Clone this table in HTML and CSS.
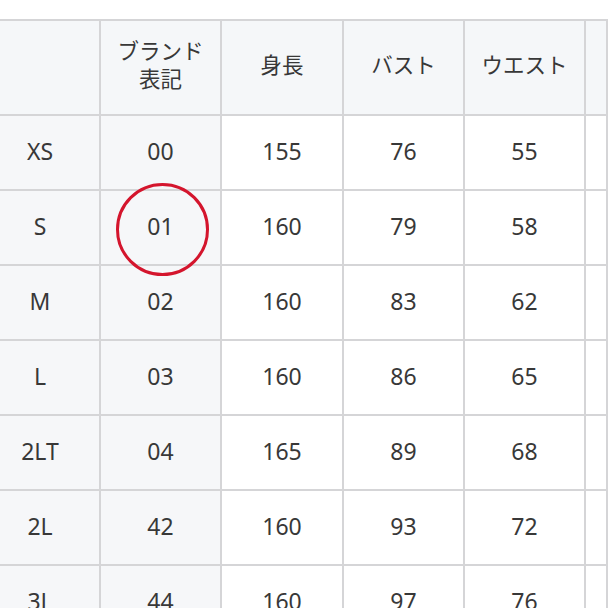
FILE: index.html
```html
<!DOCTYPE html>
<html lang="ja">
<head>
<meta charset="utf-8">
<link rel="stylesheet" href="styles.css">
</head>
<body>
<div class="wrap">
<table class="size-table">
  <colgroup>
    <col class="c-size"><col class="c-brand"><col class="c-h"><col class="c-b"><col class="c-w"><col class="c-last">
  </colgroup>
  <thead>
    <tr><th></th><th>ブランド<br>表記</th><th>身長</th><th>バスト</th><th>ウエスト</th><th></th></tr>
  </thead>
  <tbody>
    <tr><th>XS</th><td class="brand">00</td><td>155</td><td>76</td><td>55</td><td></td></tr>
    <tr><th>S</th><td class="brand marked">01<span class="ring"></span></td><td>160</td><td>79</td><td>58</td><td></td></tr>
    <tr><th>M</th><td class="brand">02</td><td>160</td><td>83</td><td>62</td><td></td></tr>
    <tr><th>L</th><td class="brand">03</td><td>160</td><td>86</td><td>65</td><td></td></tr>
    <tr><th>2LT</th><td class="brand">04</td><td>165</td><td>89</td><td>68</td><td></td></tr>
    <tr><th>2L</th><td class="brand">42</td><td>160</td><td>93</td><td>72</td><td></td></tr>
    <tr><th>3L</th><td class="brand">44</td><td>160</td><td>97</td><td>76</td><td></td></tr>
  </tbody>
</table>
</div>
</body>
</html>
```
FILE: styles.css
```css
html, body {
  margin: 0;
  padding: 0;
  background: #ffffff;
  overflow: hidden;
}
.wrap {
  padding-top: 19px;
  width: 608px;
  height: 608px;
  overflow: hidden;
}
.size-table {
  margin-left: -21px;
  table-layout: fixed;
  border-collapse: separate;
  border-spacing: 2px;
  background: #d5d5d7;
  width: 629px;
  font-family: "Noto Sans", "Noto Sans CJK JP", sans-serif;
  font-size: 23px;
  color: #383838;
}
.c-size { width: 118px; }
.c-brand { width: 119px; }
.c-h { width: 120px; }
.c-b { width: 119px; }
.c-w { width: 119px; }
.c-last { width: 20px; }
.size-table th,
.size-table td {
  padding: 0 0 4px 0;
  text-align: center;
  vertical-align: middle;
  font-weight: 400;
  background: #ffffff;
  height: 69px;
  line-height: 28px;
}
.size-table thead th {
  background: #f5f7f9;
  height: 87px;
  padding-bottom: 6px;
  font-size: 21.5px;
}
.size-table tbody th,
.size-table td.brand {
  background: #f6f7f9;
}
.marked {
  position: relative;
}
.ring {
  position: absolute;
  left: 50%;
  top: 50%;
  width: 87px;
  height: 87px;
  margin-left: -45px;
  margin-top: -45px;
  border: 3px solid #d4152d;
  border-radius: 50%;
}
```
